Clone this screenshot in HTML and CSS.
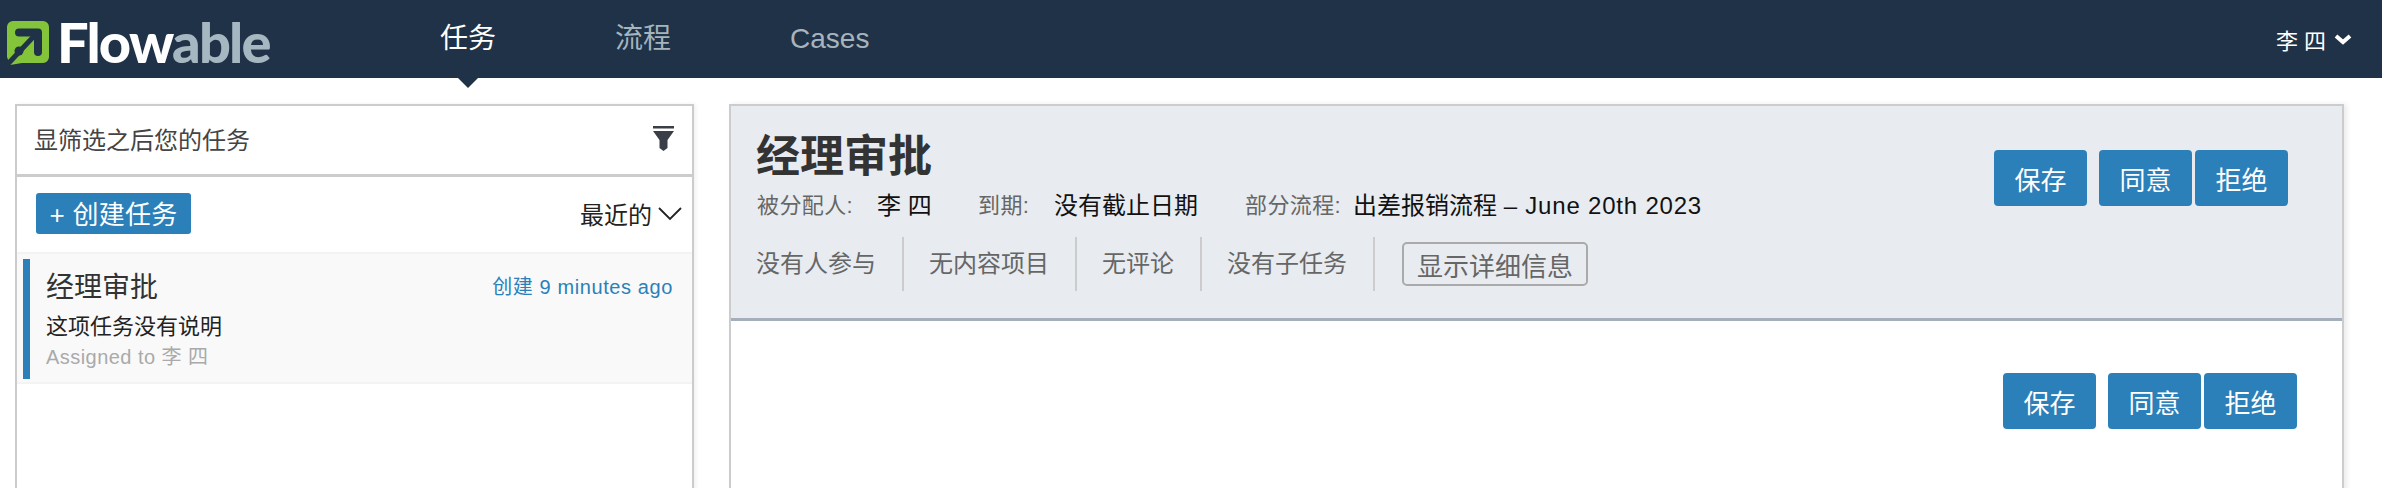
FILE: index.html
```html
<!DOCTYPE html>
<html lang="zh">
<head>
<meta charset="utf-8">
<title>Flowable</title>
<link rel="stylesheet" href="styles.css">
</head>
<body>
<header class="topbar">
  <div class="logo">
    <svg class="logo-mark" width="46" height="46" viewBox="0 0 46 46">
      <path d="M7 1h30a6 6 0 0 1 6 6v30a6 6 0 0 1-6 6H16L4 45l-3-8V7a6 6 0 0 1 6-6z" fill="#84c43a"/>
      <path d="M13 12.500H32V32" fill="none" stroke="#1f3247" stroke-width="8" stroke-linecap="round" stroke-linejoin="round"/>
      <path d="M30 14L0 46" fill="none" stroke="#1f3247" stroke-width="5"/>
      <circle cx="13" cy="31" r="4.500" fill="#1f3247"/>
    </svg>
    <span class="logo-text"><span class="logo-flow">Flow</span><span class="logo-able">able</span></span>
  </div>
  <nav class="tabs">
    <a class="tab tab-active">任务</a>
    <a class="tab">流程</a>
    <a class="tab">Cases</a>
  </nav>
  <div class="user">
    <span>李 四</span>
    <svg width="18" height="12" viewBox="0 0 18 12"><path d="M2 3l7 6 7-6" fill="none" stroke="#fff" stroke-width="4"/></svg>
  </div>
</header>
<main class="content">
  <section class="list-panel">
    <div class="filter-row">
      <span>显筛选之后您的任务</span>
      <svg width="21" height="25" viewBox="0 0 21 25"><path d="M0 0h21v2.500H0zM0 5h21l-6.500 9v8l-4 3-4-3v-8z" fill="#3a3f47"/></svg>
    </div>
    <div class="action-row">
      <button class="btn-create">+ 创建任务</button>
      <div class="sort">
        <span>最近的</span>
        <svg width="24" height="14" viewBox="0 0 24 14"><path d="M1 1l11 11L23 1" fill="none" stroke="#222" stroke-width="1.800"/></svg>
      </div>
    </div>
    <article class="task">
      <div class="task-inner">
        <div class="task-head">
          <span class="task-title">经理审批</span>
          <span class="task-time">创建 9 minutes ago</span>
        </div>
        <div class="task-desc">这项任务没有说明</div>
        <div class="task-assignee">Assigned to 李 四</div>
      </div>
    </article>
  </section>
  <section class="detail-panel">
    <div class="detail-head">
      <div class="detail-info">
        <h1 class="detail-title">经理审批</h1>
        <div class="meta">
          <span class="meta-label meta-a">被分配人:</span><span class="meta-value meta-b">李 四</span>
          <span class="meta-label meta-c">到期:</span><span class="meta-value meta-d">没有截止日期</span>
          <span class="meta-label meta-e">部分流程:</span><span class="meta-value">出差报销流程 <span class="meta-latin">– June 20th 2023</span></span>
        </div>
        <div class="stats">
          <span class="stat stat-first">没有人参与</span>
          <span class="stat">无内容项目</span>
          <span class="stat">无评论</span>
          <span class="stat">没有子任务</span>
          <button class="btn-details">显示详细信息</button>
        </div>
      </div>
      <div class="actions actions-head">
        <button class="btn">保存</button>
        <button class="btn btn-gap">同意</button>
        <button class="btn">拒绝</button>
      </div>
    </div>
    <div class="detail-body">
      <div class="actions">
        <button class="btn">保存</button>
        <button class="btn btn-gap">同意</button>
        <button class="btn">拒绝</button>
      </div>
    </div>
  </section>
</main>
</body>
</html>
```
FILE: styles.css
```css
* { box-sizing: border-box; }
html, body { margin: 0; height: 488px; overflow: hidden; background: #fff; }
body { font-family: "Liberation Sans", "Noto Sans CJK SC", sans-serif; color: #222; }
button { font-family: inherit; cursor: pointer; }

.topbar { position: relative; height: 78px; background: #1f3247; display: flex; align-items: center; }
.logo { width: 440px; height: 78px; display: flex; align-items: flex-start; padding: 20px 0 0 6px; flex: none; }
.logo-mark { flex: none; }
.logo-text { font-family: Lato, sans-serif; font-weight: 900; font-size: 56px; line-height: 44px; margin-left: 5px; letter-spacing: -1.800px; }
.logo-flow { color: #fff; }
.logo-able { color: #a5b8c1; }
.tabs { display: flex; align-items: center; gap: 119px; height: 78px; }
.tab { position: relative; font-size: 28px; line-height: 78px; color: #a5b4bd; }
.tab-active { color: #fff; }
.tab-active::after { content: ""; position: absolute; left: 18px; top: 78px; border: 10px solid transparent; border-top-color: #1f3247; border-bottom: 0; }
.user { margin-left: auto; margin-right: 30px; display: flex; align-items: center; gap: 8px; color: #fff; font-size: 22px; }

.content { display: flex; align-items: flex-start; gap: 35px; padding: 26px 38px 0 15px; }
.list-panel { flex: none; width: 679px; height: 420px; border: 2px solid #ccc; border-bottom: 0; box-shadow: 2px 0 4px rgba(0,0,0,.06); }
.filter-row { height: 71px; display: flex; align-items: center; justify-content: space-between; padding: 0 18px 3px 17px; font-size: 24px; color: #444; border-bottom: 3px solid #ccc; }
.action-row { height: 77px; display: flex; align-items: center; justify-content: space-between; padding: 0 10px 2px 19px; border-bottom: 2px solid #f3f3f3; }
.btn-create { width: 155px; height: 41px; border: 0; border-radius: 3px; background: #2b80b9; color: #fff; font-size: 26px; padding: 0 0 2px; letter-spacing: .3px; }
.sort { display: flex; align-items: center; gap: 6px; font-size: 24px; color: #222; }
.task { height: 130px; background: #f9f9f9; padding: 5px 0 5px 6px; border-bottom: 2px solid #f3f3f3; }
.task-inner { height: 120px; border-left: 7px solid #2b80b9; padding: 10px 19px 0 16px; }
.task-head { display: flex; justify-content: space-between; align-items: center; height: 32px; }
.task-title { font-size: 28px; color: #333; }
.task-time { font-size: 20px; color: #2b80b9; letter-spacing: .6px; }
.task-desc { font-size: 22px; line-height: 30px; margin-top: 11px; color: #222; }
.task-assignee { font-size: 20px; line-height: 28px; margin-top: 1px; color: #aaa; letter-spacing: .45px; }

.detail-panel { flex: 1; height: 420px; border: 2px solid #ccc; border-bottom: 0; box-shadow: 3px 0 5px rgba(0,0,0,.08); }
.detail-head { height: 215px; background: #e8ecf0; border-bottom: 3px solid #a5aebb; display: flex; justify-content: space-between; padding: 26px 54px 0 26px; }
.detail-title { margin: 0 0 0 -1px; font-size: 44px; line-height: 50px; font-weight: 700; color: #333; }
.meta { display: flex; align-items: center; height: 30px; margin-top: 6px; }
.meta-label { font-size: 22px; color: #666; letter-spacing: .4px; }
.meta-value { font-size: 24px; color: #111; }
.meta-latin { letter-spacing: .8px; }
.meta-a { width: 120px; }
.meta-b { width: 101px; }
.meta-c { width: 76px; }
.meta-d { width: 191px; }
.meta-e { width: 108px; }
.stats { display: flex; align-items: center; height: 54px; margin-top: 19px; }
.stat { height: 54px; line-height: 54px; font-size: 24px; color: #666; padding: 0 26px 0 25px; border-right: 2px solid #ccc; }
.stat-first { padding-left: 0; margin-left: -1px; }
.btn-details { height: 44px; width: 186px; margin-left: 27px; padding: 0; font-size: 26px; color: #666; background: transparent; border: 2px solid #aaa; border-radius: 5px; }
.actions { display: flex; justify-content: flex-end; }
.actions-head { padding-top: 18px; }
.btn { width: 93px; height: 56px; border: 0; border-radius: 4px; background: #2b80b9; color: #fff; font-size: 26px; padding: 0; margin-left: 3px; }
.btn-gap { margin-left: 12px; }
.detail-body { padding: 52px 45px 0 0; }
```
